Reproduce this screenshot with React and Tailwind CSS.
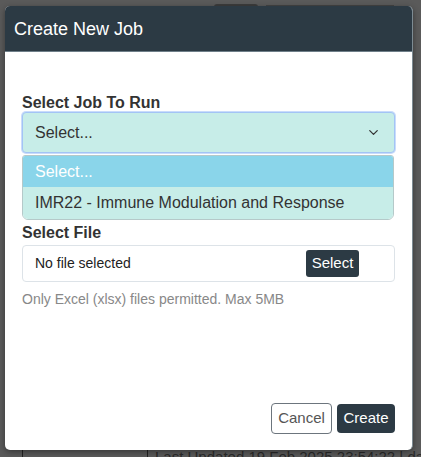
import { ChevronDown } from "lucide-react"

const font = { fontFamily: '"Liberation Sans", Arial, sans-serif' }

function Backdrop() {
  return (
    <div className="absolute inset-0 bg-[#5a5a5a]">
      <div className="absolute left-[214px] top-[4px] w-[44px] h-[3px] bg-[#3c3c3c] rounded-t" />
      <div className="absolute left-[266px] top-[5px] w-[128px] h-[2px] bg-[#444]" />
      <div className="absolute left-[22px] top-[450px] w-px h-[7px] bg-[#222]" />
      <div className="absolute left-[147px] top-[450px] w-px h-[7px] bg-[#222]" />
      <div className="absolute left-[155px] top-[446px] text-[15px] text-[#2a2a2a] whitespace-nowrap">
        Last Updated 19 Feb 2025 23:54:22 | dara
      </div>
    </div>
  )
}

export default function App() {
  return (
    <div className="relative w-[421px] h-[457px] overflow-hidden" style={font}>
      <Backdrop />

      <div className="relative ml-[5px] mt-[6px] w-[408px] h-[444px] bg-white rounded-[5px] border-r border-[#7d8b93] flex flex-col overflow-hidden shadow-[0_2px_6px_rgba(0,0,0,0.4)]">
        <div className="h-[46px] bg-[#2c3a44] border-b border-[#6f7f89] flex items-center px-[9px]">
          <h2 className="text-[18px] text-white leading-none">Create New Job</h2>
        </div>

        <div className="flex-1 flex flex-col px-[17px] pt-[42px]">
          <label className="text-[16px] font-bold text-[#333] leading-[18px]">Select Job To Run</label>

          <div className="h-[41px] rounded-[4px] bg-[#c7ede8] border border-[#a3c4f5] ring-1 ring-[#c9dcfb] flex items-center justify-between pl-[12px] pr-[13px]">
            <span className="text-[16px] text-[#333]">Select...</span>
            <ChevronDown className="w-[15px] h-[15px] text-[#333]" strokeWidth={2} />
          </div>

          <div className="mt-[2px] mr-px rounded-b-[6px] rounded-t-[3px] border border-[#b5c9c9] overflow-hidden">
            <div className="h-[31px] bg-[#8ad5ea] flex items-center pl-[12px] text-[16px] text-white">Select...</div>
            <div className="h-[32px] bg-[#c7ede8] flex items-center pl-[12px] text-[16px] text-[#333]">
              IMR22 - Immune Modulation and Response
            </div>
          </div>

          <label className="mt-[3px] text-[16px] font-bold text-[#333] leading-[20px]">Select File</label>

          <div className="mt-[2px] h-[37px] rounded-[4px] border border-[#dde3e8] flex items-center justify-between pl-[12px] pr-[35px]">
            <span className="text-[14px] text-[#222]">No file selected</span>
            <button className="h-[27px] w-[53px] bg-[#2c3a44] text-white text-[15px] rounded-[3px]">Select</button>
          </div>

          <p className="mt-[7px] text-[14px] text-[#888]">Only Excel (xlsx) files permitted. Max 5MB</p>

          <div className="flex-1" />

          <div className="flex justify-end items-center gap-[5px] pb-[16px]">
            <button className="h-[31px] w-[61px] border border-[#6c757d] rounded-[4px] text-[15px] text-[#555]">Cancel</button>
            <button className="h-[29px] w-[58px] bg-[#2c3a44] rounded-[4px] text-[15px] text-white">Create</button>
          </div>
        </div>
      </div>
    </div>
  )
}
